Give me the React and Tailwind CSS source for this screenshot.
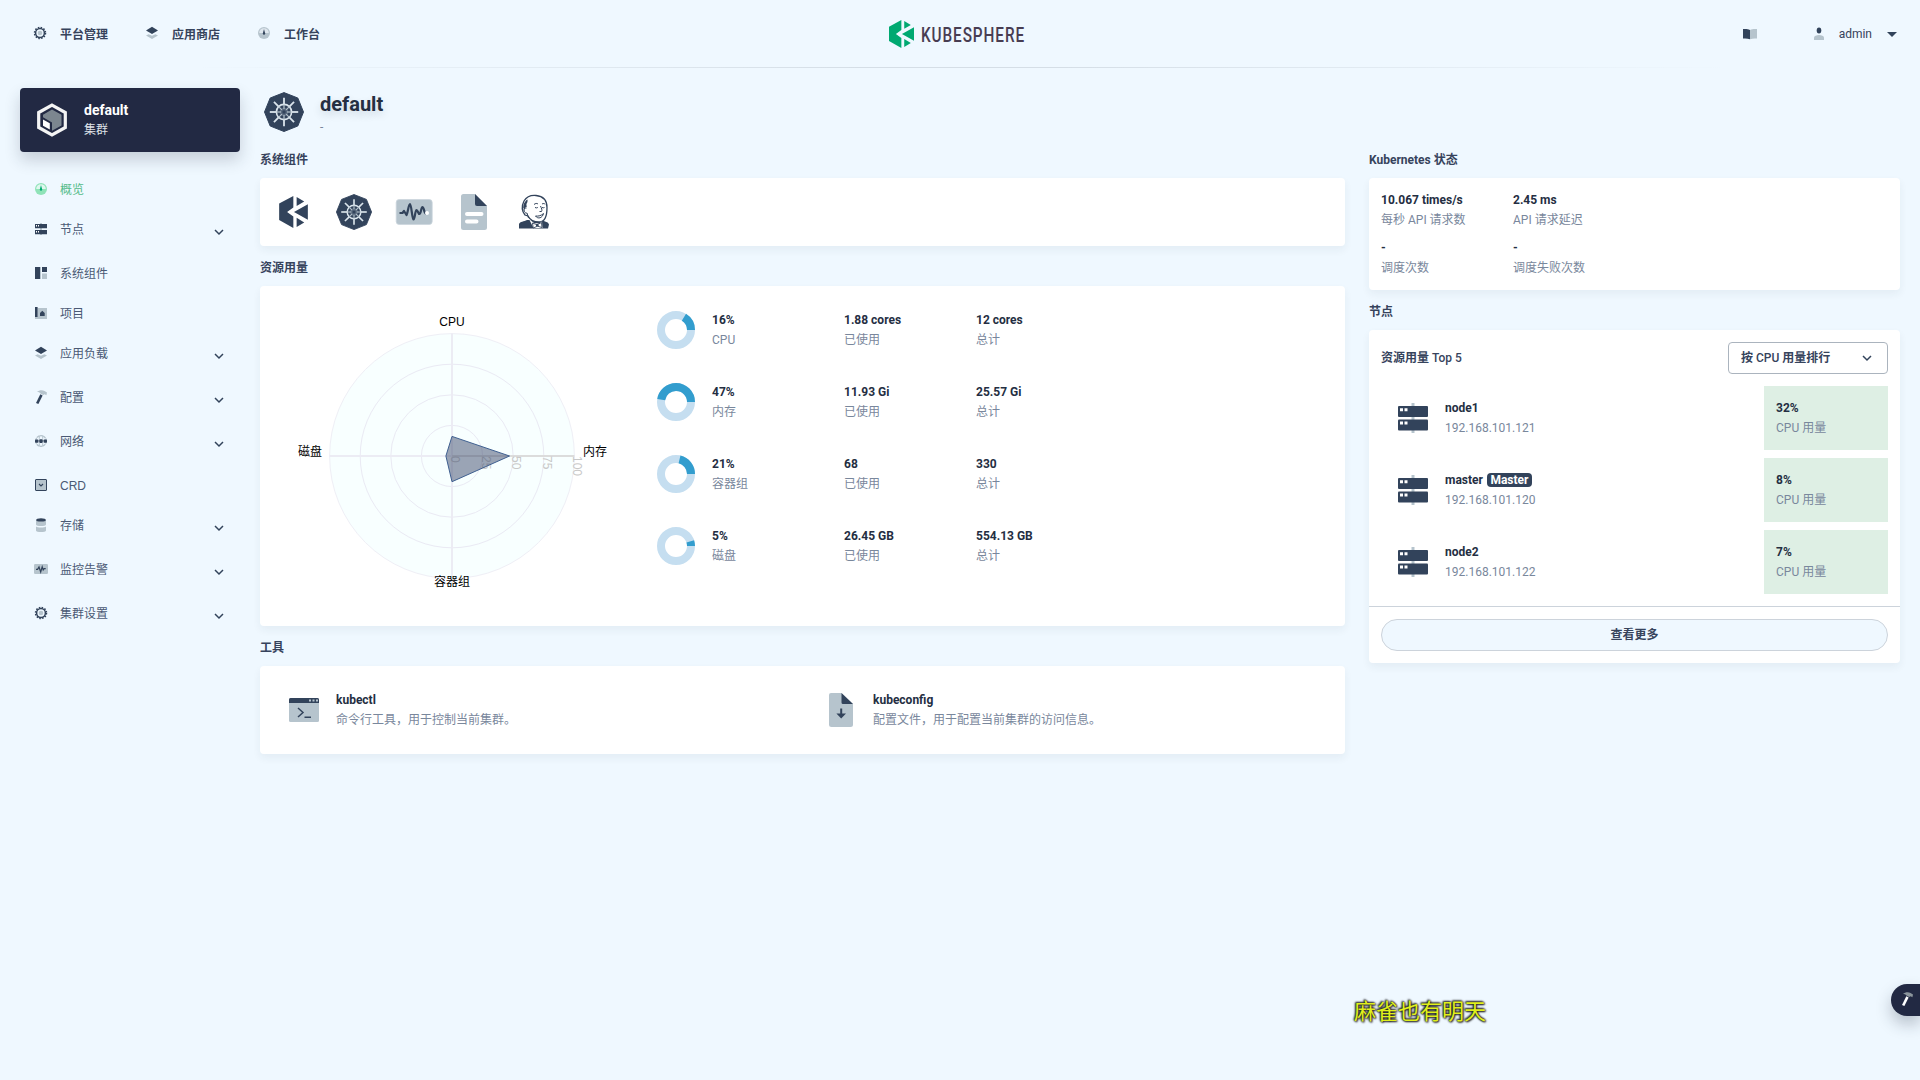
const NAVY = "#32435b";
const LIGHT = "#b6c4cd";

function Gear({ size = 14 }) {
  return (
    <svg width={size} height={size} viewBox="0 0 14 14">
      <circle cx="7" cy="7" r="5.5" fill="none" stroke={NAVY} strokeWidth="1.5" strokeDasharray="1.5 1.38" />
      <circle cx="7" cy="7" r="4.4" fill="none" stroke={NAVY} strokeWidth="1.5" />
      <circle cx="7" cy="7" r="2.3" fill={LIGHT} />
    </svg>
  );
}

function Layers() {
  return (
    <svg width="14" height="14" viewBox="0 0 14 14">
      <path d="M1 9.6 3.6 8.2 7 9.8l3.4-1.6L13 9.6 7 13z" fill={LIGHT} />
      <path d="M7 .8 13 4.4 7 8 1 4.4z" fill={NAVY} />
    </svg>
  );
}

function Dashboard({ light = LIGHT, dark = NAVY, face = "#dfe7ee" }) {
  return (
    <svg width="14" height="14" viewBox="0 0 14 14">
      <circle cx="7" cy="7" r="6" fill={light} />
      <path d="M2.200 7a4.800 4.800 0 0 1 9.600 0z" fill={face} />
      <path d="M7 3 8.200 7.600a1.200 1.200 0 1 1-2.400 0z" fill={dark} />
    </svg>
  );
}

function Nodes() {
  return (
    <svg width="40" height="40" viewBox="0 0 40 40">
      <path d="M18.500 5h3v30h-3z" fill={LIGHT} />
      <rect x="5" y="8" width="30" height="11" rx="1" fill={NAVY} />
      <rect x="5" y="21.500" width="30" height="11" rx="1" fill={NAVY} />
      <path d="M7 10.200h3v3H7zM11.500 10.200h3v3h-3zM7 23.500h3v3H7zM11.500 23.500h3v3h-3z" fill="#fff" />
    </svg>
  );
}

function SmallNodes() {
  return (
    <svg width="14" height="14" viewBox="0 0 14 14">
      <path d="M6 1h2v12H6z" fill={LIGHT} />
      <path d="M1 2h12v4.200H1zM1 8h12v4.200H1z" fill={NAVY} />
      <path d="M2 3h1v1.400H2zM4 3h1v1.400H4zM2 9h1v1.400H2zM4 9h1v1.400H4z" fill="#fff" />
    </svg>
  );
}

function Components() {
  return (
    <svg width="14" height="14" viewBox="0 0 14 14">
      <path d="M1 1h5v12H1zM8 1h5v5H8z" fill={NAVY} />
      <path d="M8 7.500h5V13H8zM6 1h1v12H6z" fill={LIGHT} />
    </svg>
  );
}

function Project() {
  return (
    <svg width="14" height="14" viewBox="0 0 14 14">
      <path d="M3.500 2H13v11H1v-2h2.500z" fill={LIGHT} />
      <path d="M1 1h2.600v10H1zM6 10V7l2.300-2.200L10.700 7v3z" fill={NAVY} />
    </svg>
  );
}

function Hammer({ head = LIGHT, handle = NAVY }) {
  return (
    <svg width="14" height="14" viewBox="0 0 14 14">
      <path d="M3 2C5 .1 8.500 0 10.500 1l2.500 1.500-.6 2.700-1.700-.9-1.500.8-2.700-1.500C5.500 2.200 4.500 2 3 2z" fill={head} />
      <path d="m6.300 4.300 2.300 1.100L4.400 14l-2.400-1z" fill={handle} />
    </svg>
  );
}

function Network() {
  return (
    <svg width="14" height="14" viewBox="0 0 14 14">
      <circle cx="7" cy="7" r="5.300" fill="none" stroke={LIGHT} strokeWidth="1.300" strokeDasharray="2.800 .53" />
      <path d="M5.300 1.500v3.300M8.700 1.500v3.300M5.300 9.200v3.300M8.700 9.200v3.300" stroke={LIGHT} />
      <rect x="1" y="5.500" width="3.500" height="3.200" rx=".8" fill={NAVY} />
      <rect x="5.200" y="5.300" width="3.600" height="3.600" rx=".8" fill={NAVY} />
      <rect x="9.500" y="5.500" width="3.500" height="3.200" rx=".8" fill={NAVY} />
    </svg>
  );
}

function Crd() {
  return (
    <svg width="14" height="14" viewBox="0 0 14 14">
      <rect x="1.500" y="1.500" width="11" height="11" rx=".5" fill={LIGHT} stroke={NAVY} />
      <path d="m5 6 2 2 2-2" fill="none" stroke={NAVY} strokeWidth="1.100" />
    </svg>
  );
}

function Storage() {
  return (
    <svg width="14" height="14" viewBox="0 0 14 14">
      <path d="M2 2v4.500c0 2 10 2 10 0V2zM2 8.400v4c0 2 10 2 10 0v-4c-1.500 1.400-8.500 1.400-10 0z" fill={LIGHT} />
      <ellipse cx="7" cy="1.900" rx="4.800" ry="1.600" fill={NAVY} />
    </svg>
  );
}

function MonitorSmall() {
  return (
    <svg width="14" height="14" viewBox="0 0 14 14">
      <rect x="0" y="2" width="14" height="10" rx="1.200" fill={LIGHT} />
      <path d="M2 7.300h1.600L5 5l1.700 5L8.200 4.800l1 3.200.9-1.300h1.600" fill="none" stroke={NAVY} strokeWidth="1.200" />
    </svg>
  );
}

function Chevron() {
  return (
    <svg width="12" height="12" viewBox="0 0 12 12">
      <path d="M2 4l4 4 4-4" fill="none" stroke={NAVY} strokeWidth="1.500" />
    </svg>
  );
}

function KsMark({ width, height, fill }) {
  return (
    <svg width={width} height={height} viewBox="0 0 87 97" fill={fill}>
      <path d="M0 23 43 0v35L24 48.500 43 62v35L0 73z" />
      <path d="M53 3 76 17 53 30zM87 25v47L45 48.500zM53 66l23 14-23 14z" />
    </svg>
  );
}

const SPOKES = [0, 45, 90, 135, 180, 225, 270, 315];

function KubeWheel({ size }) {
  return (
    <svg width={size} height={size} viewBox="0 0 40 40">
      <path d="M20 .6 33.800 6 39.500 20 33.800 34 20 39.500 6.200 34 .5 20 6.200 6z" fill={NAVY} stroke={NAVY} strokeLinejoin="round" />
      <circle cx="20" cy="20" r="7.600" fill="none" stroke="#dbe5ec" strokeWidth="1.600" />
      <circle cx="20" cy="20" r="4.300" fill={LIGHT} opacity=".3" />
      {SPOKES.map((a) => (
        <g key={a} transform={`rotate(${a} 20 20)`}>
          <path d="M20 12.400V5.800" stroke="#dbe5ec" strokeWidth="1.800" />
          <path d="M20 17v-4.600" stroke={LIGHT} strokeWidth="1.200" />
        </g>
      ))}
      <circle cx="20" cy="20" r="1.700" fill={NAVY} />
    </svg>
  );
}

function Monitor() {
  return (
    <svg width="40" height="40" viewBox="0 0 40 40">
      <rect x="2.200" y="7.500" width="36" height="25" rx="3" fill={LIGHT} stroke="#cbd6dd" strokeWidth=".8" />
      <path d="M5.500 21h3l1.500-2 2.500 4c1.500-2 2-11 3.500-11s2 15.500 3.500 15.500S21 18 22.500 18s1.500 4 3 4 1.500-7 3-7 1.500 6.500 3.500 6.500" fill="none" stroke={NAVY} strokeWidth="2.200" strokeLinejoin="round" />
      <circle cx="33" cy="21" r="2" fill="#fff" />
    </svg>
  );
}

function Doc() {
  return (
    <svg width="40" height="40" viewBox="0 0 40 40">
      <path d="M9.500 2H21l12 12v21.500a2.500 2.500 0 0 1-2.500 2.500h-21A2.500 2.500 0 0 1 7 35.500v-31A2.500 2.500 0 0 1 9.500 2z" fill={LIGHT} />
      <path d="M21 2v10a2 2 0 0 0 2 2h10z" fill={NAVY} />
      <path d="M13 22h14.500M13 29.500h9.500" stroke="#fff" strokeWidth="4" strokeLinecap="round" />
    </svg>
  );
}

function Jenkins() {
  return (
    <svg width="40" height="40" viewBox="0 0 40 40">
      <path d="M5 36.500V32c1-2.500 5-2.500 8-4h14c4 1.500 7.500 2 8 4.500l-1 4z" fill={NAVY} />
      <path d="M11 23C7 18 8.500 12 10 9 12.500 5 17 3 22 3.500c7 .7 11 5 11 12C33 24 31 30 25 30c-5 0-9-2-11-6z" fill="#fff" stroke={NAVY} strokeWidth="1.300" />
      <path d="M12.500 8c-2.500 2.500-3.300 5-3.300 8l1.500 1.500c.2-2 .8-2.500 2-2.500l-.3-3c1-1.500 1.500-3 1-4.500z" fill={NAVY} />
      <path d="M12.500 16c-2.500-.5-3 1.500-2 3.500.7 1.500 1.500 1.800 2.500 1.500M13 21l1.500 5M20 12.500c1.500-1.300 3-1.300 4-.5M28 12c1.300-.8 2.500-.5 3.200.3M21 15.500c1 .5 2 .5 2.800 0M28 15.500c1 .4 1.700.4 2.500 0M26.500 14c1 2.500 2 4 1 5.500h-2M21.500 24c3 .5 6-.5 8-2.500-1 4.500-5.500 6-8 2.500z" fill="none" stroke={NAVY} strokeWidth="1" />
      <path d="m15 27 5 4 5 .5 3-2 .5 6.500h-9z" fill="#fff" />
      <path d="m18.500 31 4.500 1.700 4.500-2.200.5 5-4.500-1.300-4.300 1.800z" fill="#fff" stroke={NAVY} strokeWidth=".9" />
      <circle cx="23.300" cy="33.200" r="1.300" fill={NAVY} />
    </svg>
  );
}

function Terminal() {
  return (
    <svg width="40" height="40" viewBox="0 0 40 40">
      <rect x="5" y="8" width="30" height="24" rx="1.500" fill={LIGHT} />
      <path d="M5 13V9.500A1.500 1.500 0 0 1 6.500 8h27A1.500 1.500 0 0 1 35 9.500V13z" fill={NAVY} />
      <path d="M25 9.500h2v2h-2zM28.500 9.500h2v2h-2zM32 9.500h2v2h-2z" fill={LIGHT} />
      <path d="m14 18 5 4.500-5 4.500M20.500 27.300h6.500" fill="none" stroke={NAVY} strokeWidth="1.500" />
    </svg>
  );
}

function Download() {
  return (
    <svg width="40" height="40" viewBox="0 0 40 40">
      <path d="M10 3h10.500L32 14v20.500a2.500 2.500 0 0 1-2.500 2.500H10.500A2.500 2.500 0 0 1 8 34.500V5a2 2 0 0 1 2-2z" fill={LIGHT} />
      <path d="M20.500 3v9.500A1.500 1.500 0 0 0 22 14h10z" fill={NAVY} />
      <path d="M19.200 18.500h2v5H25l-4.800 5-4.800-5h3.800z" fill={NAVY} />
    </svg>
  );
}

function Cluster() {
  return (
    <svg width="32" height="36" viewBox="0 0 32 36">
      <path d="M16 3.200 29.300 10.500v15L16 32.800 2.700 25.500v-15z" fill="#222943" stroke="#f4f4f4" strokeWidth="3.200" />
      <path d="M16 7.500 25.500 12.700v10.800L16 28.700v-8.200L7 15.200v-2.500z" fill="#7c868f" />
      <path d="m7 17.500 6.800 3.800v6.200L7 23.700z" fill="#fff" />
    </svg>
  );
}

const NAV = [
  ["平台管理", Gear],
  ["应用商店", Layers],
  ["工作台", Dashboard],
];

const MENU = [
  ["概览", Dashboard, false],
  ["节点", SmallNodes, true],
  ["系统组件", Components, false],
  ["项目", Project, false],
  ["应用负载", Layers, true],
  ["配置", Hammer, true],
  ["网络", Network, true],
  ["CRD", Crd, false],
  ["存储", Storage, true],
  ["监控告警", MonitorSmall, true],
  ["集群设置", Gear, true],
];

const USAGE = [
  [16, "CPU", "1.88 cores", "12 cores"],
  [47, "内存", "11.93 Gi", "25.57 Gi"],
  [21, "容器组", "68", "330"],
  [5, "磁盘", "26.45 GB", "554.13 GB"],
];

const NODES = [
  ["node1", false, "192.168.101.121", "32%"],
  ["master", true, "192.168.101.120", "8%"],
  ["node2", false, "192.168.101.122", "7%"],
];

function Header() {
  return (
    <header>
      <div className="flex h-[67px] items-center justify-between pr-[22px] pl-[33px]">
        <nav className="flex w-[600px] gap-[37px]">
          {NAV.map(([label, Icon]) => (
            <div key={label} className="flex items-center gap-[13px]">
              <span className="-mt-0.5"><Icon /></span>
              <span className="pt-0.5 text-xs leading-5 font-bold text-[#36435c]">{label}</span>
            </div>
          ))}
        </nav>
        <div className="mr-[12px] flex items-center gap-1.5 pt-px">
          <KsMark width="25" height="28" fill="#00a971" />
          <svg width="110" height="34" className="font-[Roboto,sans-serif]">
            <text x="1" y="24.500" fontSize="20.500" fontWeight="500" letterSpacing="1.200" textLength="104" lengthAdjust="spacingAndGlyphs" fill="#483d52">KUBESPHERE</text>
          </svg>
        </div>
        <div className="flex w-[600px] items-center justify-end">
          <svg width="14" height="12" viewBox="0 0 14 12" className="mr-[57px]">
            <path d="M7 2c2-1 4-1.300 7-1v9.500c-3-.3-5 0-7 .8z" fill={LIGHT} />
            <path d="M0 1c3-.3 5 0 7 1v9.300c-2-.8-4-1.100-7-.8z" fill={NAVY} />
          </svg>
          <svg width="10" height="14" viewBox="0 0 10 14" className="mr-[15px]">
            <path d="M0 13v-2.500C0 7 10 7 10 10.500V13z" fill={LIGHT} />
            <ellipse cx="5" cy="3.500" rx="2.300" ry="3" fill={NAVY} />
          </svg>
          <span className="text-xs leading-5 text-[#36435c]">admin</span>
          <svg width="10" height="5" viewBox="0 0 10 5" className="mt-0.5 mr-px ml-[15px]">
            <path d="M0 0h10L5 5z" fill={NAVY} />
          </svg>
        </div>
      </div>
      <div className="h-px bg-[linear-gradient(to_right,rgba(216,222,229,0)_10%,#d5dee6_45%,#d5dee6_55%,rgba(216,222,229,0)_90%)]" />
    </header>
  );
}

function Sidebar() {
  return (
    <aside className="w-[220px] shrink-0">
      <div className="flex h-16 items-center gap-4 rounded bg-[#222943] pl-4 shadow-[0_8px_16px_rgba(36,46,66,0.2)]">
        <Cluster />
        <div>
          <div className="text-sm leading-5 font-bold text-white">default</div>
          <div className="text-xs leading-5 text-[#dfe2e8]">集群</div>
        </div>
      </div>
      <ul className="mt-[27px]">
        {MENU.map(([label, Icon, expandable], i) => (
          <li key={label} className={expandable ? "flex h-11 items-start pl-3.5" : "flex h-10 items-start pl-3.5"}>
            <span className="mt-[3px] mr-3">
              {i === 0 ? <Dashboard light="#8fe3b8" dark="#00a971" face="#dff7ee" /> : <Icon />}
            </span>
            <span className={i === 0 ? "flex-1 text-xs leading-[22px] text-[#55bc8a]" : label === "CRD" ? "flex-1 font-['Liberation_Sans'] text-xs leading-[22px] text-[#4a5974]" : "flex-1 text-xs leading-[22px] text-[#4a5974]"}>{label}</span>
            {expandable && <span className="mt-[7px] mr-[15px]"><Chevron /></span>}
          </li>
        ))}
      </ul>
    </aside>
  );
}

function SectionTitle({ children }) {
  return <h3 className="flex h-10 items-center pt-1 text-xs font-bold text-[#36435c]">{children}</h3>;
}

function Card({ className = "", children }) {
  return <div className={`rounded bg-white shadow-[0_4px_8px_rgba(36,46,66,0.06)] ${className}`}>{children}</div>;
}

function Pair({ value, label, className = "" }) {
  return (
    <div className={className}>
      <div className="text-xs leading-5 font-bold whitespace-nowrap text-[#242e42]">{value}</div>
      <div className="text-xs leading-5 whitespace-nowrap text-[#79879c]">{label}</div>
    </div>
  );
}

function Radar() {
  const ticks = [0, 25, 50, 75, 100];
  return (
    <svg width="340" height="300" viewBox="-170 -150 340 300" className="font-['Liberation_Sans','Noto_Sans_CJK_SC',sans-serif] text-xs">
      <circle r="122.400" fill="#f8ffff" stroke="#efeff6" />
      {[30.6, 61.2, 91.8].map((r) => (
        <circle key={r} r={r} fill="none" stroke="#eaeaf4" />
      ))}
      <path d="M-122.400 0H0M0-122.400V130" stroke="#ececf4" strokeWidth="2" />
      <path d="M0 0H122.400" stroke="#dcdcdc" strokeWidth="2" />
      {ticks.map((t) => (
        <text key={t} x="0" y="0" fill="#c8c8c8" transform={`translate(${t * 1.224 - 1} 0) rotate(90)`}>{t}</text>
      ))}
      <path d="M0-19.600 57.500 0 0 25.700-6.100 0z" fill="#3c4a6c" fillOpacity=".5" stroke="#3f5f90" />
      <text x="0" y="-130" textAnchor="middle">CPU</text>
      <text x="131" y="0">内存</text>
      <text x="-130" y="0" textAnchor="end">磁盘</text>
      <text x="0" y="130" textAnchor="middle">容器组</text>
    </svg>
  );
}

function Donut({ pct }) {
  const c = 2 * Math.PI * 15;
  return (
    <svg width="38" height="38" viewBox="-19 -19 38 38">
      <circle r="15" fill="none" stroke="#c5def0" strokeWidth="8" />
      <circle r="15" fill="none" stroke="#329dce" strokeWidth="8" strokeDasharray={`${(c * pct) / 100} ${c}`} transform="scale(1 -1)" />
    </svg>
  );
}

function LeftColumn() {
  return (
    <div className="w-[1085px]">
      <SectionTitle>系统组件</SectionTitle>
      <Card className="flex h-[68px] items-center gap-5 px-3.5">
        <span className="flex w-10 justify-center pr-0.5"><KsMark width="29" height="32" fill={NAVY} /></span>
        <span className="flex w-10 justify-center"><KubeWheel size={36} /></span>
        <Monitor />
        <Doc />
        <Jenkins />
      </Card>
      <SectionTitle>资源用量</SectionTitle>
      <Card className="flex h-[340px] pt-5 pl-[22px]">
        <Radar />
        <div className="ml-[35px]">
          {USAGE.map(([pct, label, used, total]) => (
            <div key={label} className="flex h-[72px] items-start">
              <span className="mt-[5px] mr-[17px]"><Donut pct={pct} /></span>
              <Pair className="w-[132px] pt-1" value={`${pct}%`} label={label} />
              <Pair className="w-[132px] pt-1" value={used} label="已使用" />
              <Pair className="w-[132px] pt-1" value={total} label="总计" />
            </div>
          ))}
        </div>
      </Card>
      <SectionTitle>工具</SectionTitle>
      <Card className="flex h-[88px] items-center pl-6">
        <div className="flex w-[537px] items-center gap-3">
          <Terminal />
          <Pair value="kubectl" label="命令行工具，用于控制当前集群。" />
        </div>
        <div className="flex items-center gap-3">
          <Download />
          <Pair value="kubeconfig" label="配置文件，用于配置当前集群的访问信息。" />
        </div>
      </Card>
    </div>
  );
}

function RightColumn() {
  return (
    <div className="w-[531px]">
      <SectionTitle>Kubernetes 状态</SectionTitle>
      <Card className="grid h-28 grid-cols-[132px_1fr] content-start gap-y-2 px-3 pt-3">
        <Pair value="10.067 times/s" label="每秒 API 请求数" />
        <Pair value="2.45 ms" label="API 请求延迟" />
        <Pair value="-" label="调度次数" />
        <Pair value="-" label="调度失败次数" />
      </Card>
      <SectionTitle>节点</SectionTitle>
      <Card>
        <div className="px-3 pt-3">
          <div className="flex items-center justify-between">
            <span className="text-xs font-medium text-[#36435c]"><b>资源用量</b> Top 5</span>
            <div className="flex h-8 w-40 items-center justify-between rounded border border-[#abb4be] pr-3.5 pl-3 text-xs font-medium text-[#36435c]">
              <span><b>按</b> CPU <b>用量排行</b></span>
              <Chevron />
            </div>
          </div>
          <div className="mt-3 flex flex-col gap-2">
            {NODES.map(([name, master, ip, cpu]) => (
              <div key={name} className="flex h-16 items-center">
                <span className="mr-3 ml-3"><Nodes /></span>
                <Pair
                  className="flex-1"
                  value={
                    <span className="flex items-center">
                      {name}
                      {master && <span className="ml-1 rounded bg-[#32435b] px-[3.5px] text-xs leading-[14px] text-white">Master</span>}
                    </span>
                  }
                  label={ip}
                />
                <Pair className="h-16 w-[124px] bg-[#deefe4] px-3 pt-3" value={cpu} label="CPU 用量" />
              </div>
            ))}
          </div>
        </div>
        <div className="mt-3 border-t border-[#ccd3db] p-3">
          <div className="flex h-8 items-center justify-center rounded-full border border-[#ccd3db] bg-[#eff8ff] text-xs font-bold text-[#36435c]">查看更多</div>
        </div>
      </Card>
    </div>
  );
}

export default function App() {
  return (
    <div className="relative h-[1080px] w-[1920px] overflow-hidden bg-[#eff8ff] font-[Roboto,'Noto_Sans_CJK_SC',sans-serif]" lang="zh-CN">
      <Header />
      <div className="flex gap-5 px-5 pt-5">
        <Sidebar />
        <main className="w-[1640px]">
          <div className="flex h-[50px] gap-4 pt-1 pl-1">
            <KubeWheel size={40} />
            <div>
              <h1 className="text-xl leading-6 font-bold text-[#242e42] [text-shadow:0_4px_8px_rgba(36,46,66,0.15)]">default</h1>
              <p className="pt-px text-xs leading-5 text-[#79879c]">-</p>
            </div>
          </div>
          <div className="flex gap-6">
            <LeftColumn />
            <RightColumn />
          </div>
        </main>
      </div>
      <div className="absolute top-[996px] left-[1354px] text-[22px] leading-8 whitespace-nowrap text-[#e0f01c] [text-shadow:0_0_2px_#222,0_0_2px_#222,1px_1px_2px_#222,-1px_-1px_2px_#333]">麻雀也有明天</div>
      <div className="absolute top-[984px] right-0 flex h-8 w-[29px] items-center rounded-l-full bg-[#222943] pb-0.5 pl-[9px] shadow-[0_8px_16px_rgba(36,46,66,0.28)]">
        <Hammer head="#8b959c" handle="#ffffff" />
      </div>
    </div>
  );
}
